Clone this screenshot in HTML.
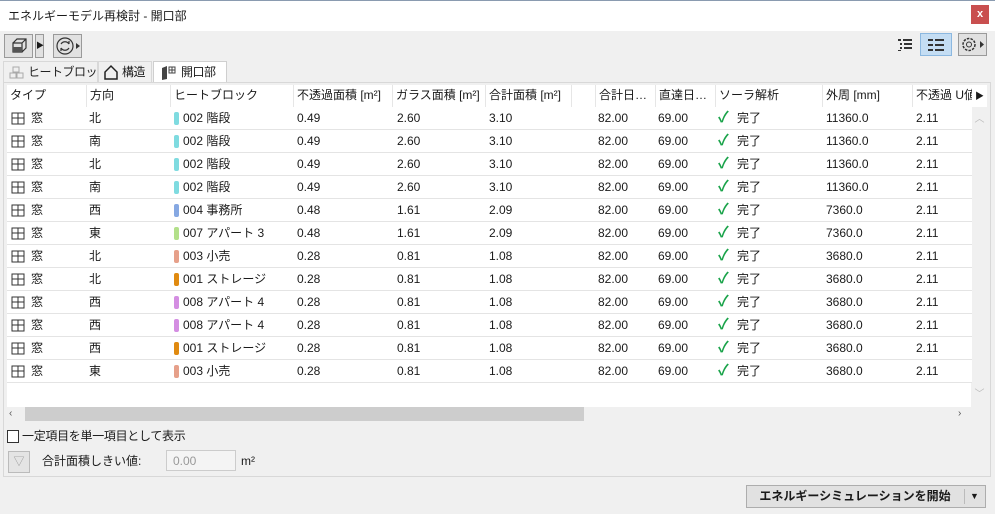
<!DOCTYPE html>
<html><head><meta charset="utf-8"><style>
*{margin:0;padding:0;box-sizing:border-box}
body{width:995px;height:514px;overflow:hidden;background:#f0f0f0;font-family:"Liberation Sans","Noto Sans CJK JP",sans-serif;font-size:12px;line-height:15px;color:#1a1a1a;position:relative}
.a{position:absolute}
.title{left:0;top:0;width:995px;height:31px;background:#fff;border-top:1px solid #8a9bb0}
.title span{position:absolute;left:8px;top:8px;font-size:12px}
.close{right:6px;top:5px;width:18px;height:19px;background:#c94f4f;color:#fff;font-size:11px;text-align:center;line-height:18px;font-weight:bold}
.btn{border:1px solid #9a9a9a;background:#e1e1e1}
.tab{top:61px;height:22px;border:1px solid #d8d8d8;border-bottom:none;background:#f0f0f0;font-size:12px;line-height:21px;white-space:nowrap;overflow:hidden;letter-spacing:-0.5px}
.panel{left:3px;top:82px;width:988px;height:395px;border:1px solid #d8d8d8;background:#f0f0f0}
.tbl{left:7px;top:85px;width:965px;height:322px;background:#fff}
.hd{top:85px;height:22px;line-height:21px;border-left:1px solid #e6e6e6;padding-left:3px;white-space:nowrap;overflow:hidden}
.row{left:7px;width:965px;height:23px;border-bottom:1px solid #e4e4e4;background:#fff}
.row div{position:absolute;top:4px;white-space:nowrap;line-height:15px}
.row svg{position:absolute;top:5px;left:4px;width:14px;height:13px}
.row .sw{width:5px;height:13px;border-radius:2px;top:5px}
.row .chk{color:#1aa34a;font-size:15px;top:3px;font-weight:bold}
</style></head><body>
<div class="a title"><span>エネルギーモデル再検討 - 開口部</span></div>
<div class="a close">x</div>
<div class="a btn" style="left:4px;top:34px;width:29px;height:24px"><svg width="27" height="22"><g fill="none" stroke="#333" stroke-width="1.2"><path d="M8 8h9v9h-9z M8 8l4-4h9v9l-4 4 M17 8l4-4"/></g><path d="M8 12h9v5h-9z" fill="#555"/></svg></div>
<div class="a btn" style="left:35px;top:34px;width:9px;height:24px;font-size:8px;line-height:22px;text-align:center">▶</div>
<div class="a btn" style="left:53px;top:34px;width:29px;height:24px"><svg width="27" height="22"><circle cx="11" cy="11" r="8" fill="none" stroke="#333" stroke-width="1.2"/><path d="M7 9c2-3 6-3 8 0M15 13c-2 3-6 3-8 0M15 9l0-3M7 13l0 3" fill="none" stroke="#333" stroke-width="1.2"/><path d="M22 8l4 3-4 3z" fill="#333"/></svg></div>
<svg class="a" style="left:896px;top:37px" width="20" height="16"><g fill="#333"><rect x="2" y="2" width="3" height="2"/><rect x="7" y="2" width="9" height="2"/><rect x="4" y="6" width="2" height="2"/><rect x="8" y="6" width="8" height="2"/><rect x="4" y="10" width="2" height="2"/><rect x="8" y="10" width="8" height="2"/><rect x="2" y="13" width="3" height="1"/></g></svg>
<div class="a" style="left:920px;top:33px;width:32px;height:23px;background:#c4ddf3;border:1px solid #8cb8e0"><svg width="30" height="21"><g fill="#333"><rect x="7" y="5" width="5" height="2"/><rect x="14" y="5" width="9" height="2"/><rect x="7" y="10" width="5" height="2"/><rect x="14" y="10" width="9" height="2"/><rect x="7" y="15" width="5" height="2"/><rect x="14" y="15" width="9" height="2"/></g></svg></div>
<div class="a btn" style="left:958px;top:33px;width:29px;height:23px"><svg width="27" height="21"><circle cx="10" cy="10.5" r="6" fill="none" stroke="#333" stroke-width="1.5" stroke-dasharray="2.5 1.2"/><circle cx="10" cy="10.5" r="2.5" fill="none" stroke="#333"/><path d="M21 7l4 3.5-4 3.5z" fill="#333"/></svg></div>
<div class="a tab" style="left:3px;width:95px;color:#222"><svg style="position:absolute;left:5px;top:3px" width="16" height="15"><g fill="none" stroke="#aaa"><path d="M4 2h6v5h-6zM1 8h6v5h-6zM8 8h6v5h-6z"/></g></svg><span style="position:absolute;left:24px;top:0">ヒートブロック</span></div>
<div class="a tab" style="left:98px;width:54px"><svg style="position:absolute;left:4px;top:2px" width="16" height="16"><path d="M2 15V8l6-6 6 6v7z" fill="none" stroke="#222" stroke-width="1.5"/></svg><span style="position:absolute;left:23px;top:0">構造</span></div>
<div class="a tab" style="left:153px;width:74px;background:#fff;height:23px;border-color:#cfcfcf"><svg style="position:absolute;left:6px;top:3px" width="18" height="15"><path d="M2 3l5-2v13l-5 1z" fill="#444"/><rect x="9" y="2" width="6" height="6" fill="none" stroke="#444"/><path d="M12 2v6M9 5h6" stroke="#444"/></svg><span style="position:absolute;left:27px;top:0">開口部</span></div>
<div class="a panel"></div>
<div class="a tbl"></div>
<div class="a hd" style="left:7px;width:79px;border:none">タイプ</div>
<div class="a hd" style="left:86px;width:84px">方向</div>
<div class="a hd" style="left:170px;width:123px">ヒートブロック</div>
<div class="a hd" style="left:293px;width:99px">不透過面積 [m²]</div>
<div class="a hd" style="left:392px;width:93px">ガラス面積 [m²]</div>
<div class="a hd" style="left:485px;width:86px">合計面積 [m²]</div>
<div class="a hd" style="left:571px;width:24px"></div>
<div class="a hd" style="left:595px;width:60px">合計日…</div>
<div class="a hd" style="left:655px;width:60px">直達日…</div>
<div class="a hd" style="left:715px;width:107px">ソーラ解析</div>
<div class="a hd" style="left:822px;width:90px">外周 [mm]</div>
<div class="a hd" style="left:912px;width:60px">不透過 U値</div>
<div class="a" style="left:972px;top:85px;width:15px;height:22px;background:#fff;font-size:9px;line-height:22px;text-align:center">▶</div>
<div class="a" style="left:971px;top:107px;width:17px;height:300px;background:#f0f0f0;color:#bbb;font-size:10px;text-align:center"><div style="position:absolute;top:5px;width:17px">︿</div><div style="position:absolute;top:280px;width:17px">﹀</div></div>
<div class="a" style="left:0;top:107px">
<div class="a row" style="top:0"><svg viewBox="0 0 14 13"><path d="M1 1h12v11h-12zM7 1v11M1 6h12" fill="none" stroke="#333"/></svg><div style="left:24px">窓</div><div style="left:82px">北</div><div class="sw" style="left:167px;background:#7fdbe0"></div><div style="left:176px">002 階段</div><div style="left:290px">0.49</div><div style="left:390px">2.60</div><div style="left:482px">3.10</div><div style="left:591px">82.00</div><div style="left:651px">69.00</div><div class="chk" style="left:711px">✓</div><div style="left:730px">完了</div><div style="left:819px">11360.0</div><div style="left:909px">2.11</div></div>
<div class="a row" style="top:23px"><svg viewBox="0 0 14 13"><path d="M1 1h12v11h-12zM7 1v11M1 6h12" fill="none" stroke="#333"/></svg><div style="left:24px">窓</div><div style="left:82px">南</div><div class="sw" style="left:167px;background:#7fdbe0"></div><div style="left:176px">002 階段</div><div style="left:290px">0.49</div><div style="left:390px">2.60</div><div style="left:482px">3.10</div><div style="left:591px">82.00</div><div style="left:651px">69.00</div><div class="chk" style="left:711px">✓</div><div style="left:730px">完了</div><div style="left:819px">11360.0</div><div style="left:909px">2.11</div></div>
<div class="a row" style="top:46px"><svg viewBox="0 0 14 13"><path d="M1 1h12v11h-12zM7 1v11M1 6h12" fill="none" stroke="#333"/></svg><div style="left:24px">窓</div><div style="left:82px">北</div><div class="sw" style="left:167px;background:#7fdbe0"></div><div style="left:176px">002 階段</div><div style="left:290px">0.49</div><div style="left:390px">2.60</div><div style="left:482px">3.10</div><div style="left:591px">82.00</div><div style="left:651px">69.00</div><div class="chk" style="left:711px">✓</div><div style="left:730px">完了</div><div style="left:819px">11360.0</div><div style="left:909px">2.11</div></div>
<div class="a row" style="top:69px"><svg viewBox="0 0 14 13"><path d="M1 1h12v11h-12zM7 1v11M1 6h12" fill="none" stroke="#333"/></svg><div style="left:24px">窓</div><div style="left:82px">南</div><div class="sw" style="left:167px;background:#7fdbe0"></div><div style="left:176px">002 階段</div><div style="left:290px">0.49</div><div style="left:390px">2.60</div><div style="left:482px">3.10</div><div style="left:591px">82.00</div><div style="left:651px">69.00</div><div class="chk" style="left:711px">✓</div><div style="left:730px">完了</div><div style="left:819px">11360.0</div><div style="left:909px">2.11</div></div>
<div class="a row" style="top:92px"><svg viewBox="0 0 14 13"><path d="M1 1h12v11h-12zM7 1v11M1 6h12" fill="none" stroke="#333"/></svg><div style="left:24px">窓</div><div style="left:82px">西</div><div class="sw" style="left:167px;background:#86a8e2"></div><div style="left:176px">004 事務所</div><div style="left:290px">0.48</div><div style="left:390px">1.61</div><div style="left:482px">2.09</div><div style="left:591px">82.00</div><div style="left:651px">69.00</div><div class="chk" style="left:711px">✓</div><div style="left:730px">完了</div><div style="left:819px">7360.0</div><div style="left:909px">2.11</div></div>
<div class="a row" style="top:115px"><svg viewBox="0 0 14 13"><path d="M1 1h12v11h-12zM7 1v11M1 6h12" fill="none" stroke="#333"/></svg><div style="left:24px">窓</div><div style="left:82px">東</div><div class="sw" style="left:167px;background:#b3e08a"></div><div style="left:176px">007 アパート 3</div><div style="left:290px">0.48</div><div style="left:390px">1.61</div><div style="left:482px">2.09</div><div style="left:591px">82.00</div><div style="left:651px">69.00</div><div class="chk" style="left:711px">✓</div><div style="left:730px">完了</div><div style="left:819px">7360.0</div><div style="left:909px">2.11</div></div>
<div class="a row" style="top:138px"><svg viewBox="0 0 14 13"><path d="M1 1h12v11h-12zM7 1v11M1 6h12" fill="none" stroke="#333"/></svg><div style="left:24px">窓</div><div style="left:82px">北</div><div class="sw" style="left:167px;background:#e6a08a"></div><div style="left:176px">003 小売</div><div style="left:290px">0.28</div><div style="left:390px">0.81</div><div style="left:482px">1.08</div><div style="left:591px">82.00</div><div style="left:651px">69.00</div><div class="chk" style="left:711px">✓</div><div style="left:730px">完了</div><div style="left:819px">3680.0</div><div style="left:909px">2.11</div></div>
<div class="a row" style="top:161px"><svg viewBox="0 0 14 13"><path d="M1 1h12v11h-12zM7 1v11M1 6h12" fill="none" stroke="#333"/></svg><div style="left:24px">窓</div><div style="left:82px">北</div><div class="sw" style="left:167px;background:#e08a10"></div><div style="left:176px">001 ストレージ</div><div style="left:290px">0.28</div><div style="left:390px">0.81</div><div style="left:482px">1.08</div><div style="left:591px">82.00</div><div style="left:651px">69.00</div><div class="chk" style="left:711px">✓</div><div style="left:730px">完了</div><div style="left:819px">3680.0</div><div style="left:909px">2.11</div></div>
<div class="a row" style="top:184px"><svg viewBox="0 0 14 13"><path d="M1 1h12v11h-12zM7 1v11M1 6h12" fill="none" stroke="#333"/></svg><div style="left:24px">窓</div><div style="left:82px">西</div><div class="sw" style="left:167px;background:#d48ee2"></div><div style="left:176px">008 アパート 4</div><div style="left:290px">0.28</div><div style="left:390px">0.81</div><div style="left:482px">1.08</div><div style="left:591px">82.00</div><div style="left:651px">69.00</div><div class="chk" style="left:711px">✓</div><div style="left:730px">完了</div><div style="left:819px">3680.0</div><div style="left:909px">2.11</div></div>
<div class="a row" style="top:207px"><svg viewBox="0 0 14 13"><path d="M1 1h12v11h-12zM7 1v11M1 6h12" fill="none" stroke="#333"/></svg><div style="left:24px">窓</div><div style="left:82px">西</div><div class="sw" style="left:167px;background:#d48ee2"></div><div style="left:176px">008 アパート 4</div><div style="left:290px">0.28</div><div style="left:390px">0.81</div><div style="left:482px">1.08</div><div style="left:591px">82.00</div><div style="left:651px">69.00</div><div class="chk" style="left:711px">✓</div><div style="left:730px">完了</div><div style="left:819px">3680.0</div><div style="left:909px">2.11</div></div>
<div class="a row" style="top:230px"><svg viewBox="0 0 14 13"><path d="M1 1h12v11h-12zM7 1v11M1 6h12" fill="none" stroke="#333"/></svg><div style="left:24px">窓</div><div style="left:82px">西</div><div class="sw" style="left:167px;background:#e08a10"></div><div style="left:176px">001 ストレージ</div><div style="left:290px">0.28</div><div style="left:390px">0.81</div><div style="left:482px">1.08</div><div style="left:591px">82.00</div><div style="left:651px">69.00</div><div class="chk" style="left:711px">✓</div><div style="left:730px">完了</div><div style="left:819px">3680.0</div><div style="left:909px">2.11</div></div>
<div class="a row" style="top:253px"><svg viewBox="0 0 14 13"><path d="M1 1h12v11h-12zM7 1v11M1 6h12" fill="none" stroke="#333"/></svg><div style="left:24px">窓</div><div style="left:82px">東</div><div class="sw" style="left:167px;background:#e6a08a"></div><div style="left:176px">003 小売</div><div style="left:290px">0.28</div><div style="left:390px">0.81</div><div style="left:482px">1.08</div><div style="left:591px">82.00</div><div style="left:651px">69.00</div><div class="chk" style="left:711px">✓</div><div style="left:730px">完了</div><div style="left:819px">3680.0</div><div style="left:909px">2.11</div></div>
</div>
<div class="a" style="left:7px;top:407px;width:980px;height:14px;background:#f0f0f0"></div>
<div class="a" style="left:25px;top:407px;width:559px;height:14px;background:#cdcdcd"></div>
<div class="a" style="left:9px;top:406px;font-size:10px;color:#555">‹</div>
<div class="a" style="left:958px;top:406px;font-size:10px;color:#555">›</div>
<div class="a" style="left:7px;top:430px;width:12px;height:13px;border:1px solid #333;background:#fff"></div>
<div class="a" style="left:22px;top:429px;letter-spacing:-0.3px">一定項目を単一項目として表示</div>
<div class="a" style="left:8px;top:451px;width:22px;height:22px;border:1px solid #bbb;background:#e4e4e4;color:#999;text-align:center;line-height:20px;font-size:11px">▽</div>
<div class="a" style="left:42px;top:454px">合計面積しきい値:</div>
<div class="a" style="left:166px;top:450px;width:70px;height:21px;border:1px solid #ccc;background:#f4f4f4;color:#999;padding:3px 0 0 6px">0.00</div>
<div class="a" style="left:241px;top:454px">m²</div>
<div class="a" style="left:746px;top:485px;width:240px;height:23px;border:1px solid #adadad;background:#e1e1e1"></div>
<div class="a" style="left:746px;top:489px;width:218px;text-align:center;font-weight:bold">エネルギーシミュレーションを開始</div>
<div class="a" style="left:964px;top:489px;width:1px;height:15px;background:#bbb"></div>
<div class="a" style="left:970px;top:489px;font-size:9px">▼</div>
</body></html>
